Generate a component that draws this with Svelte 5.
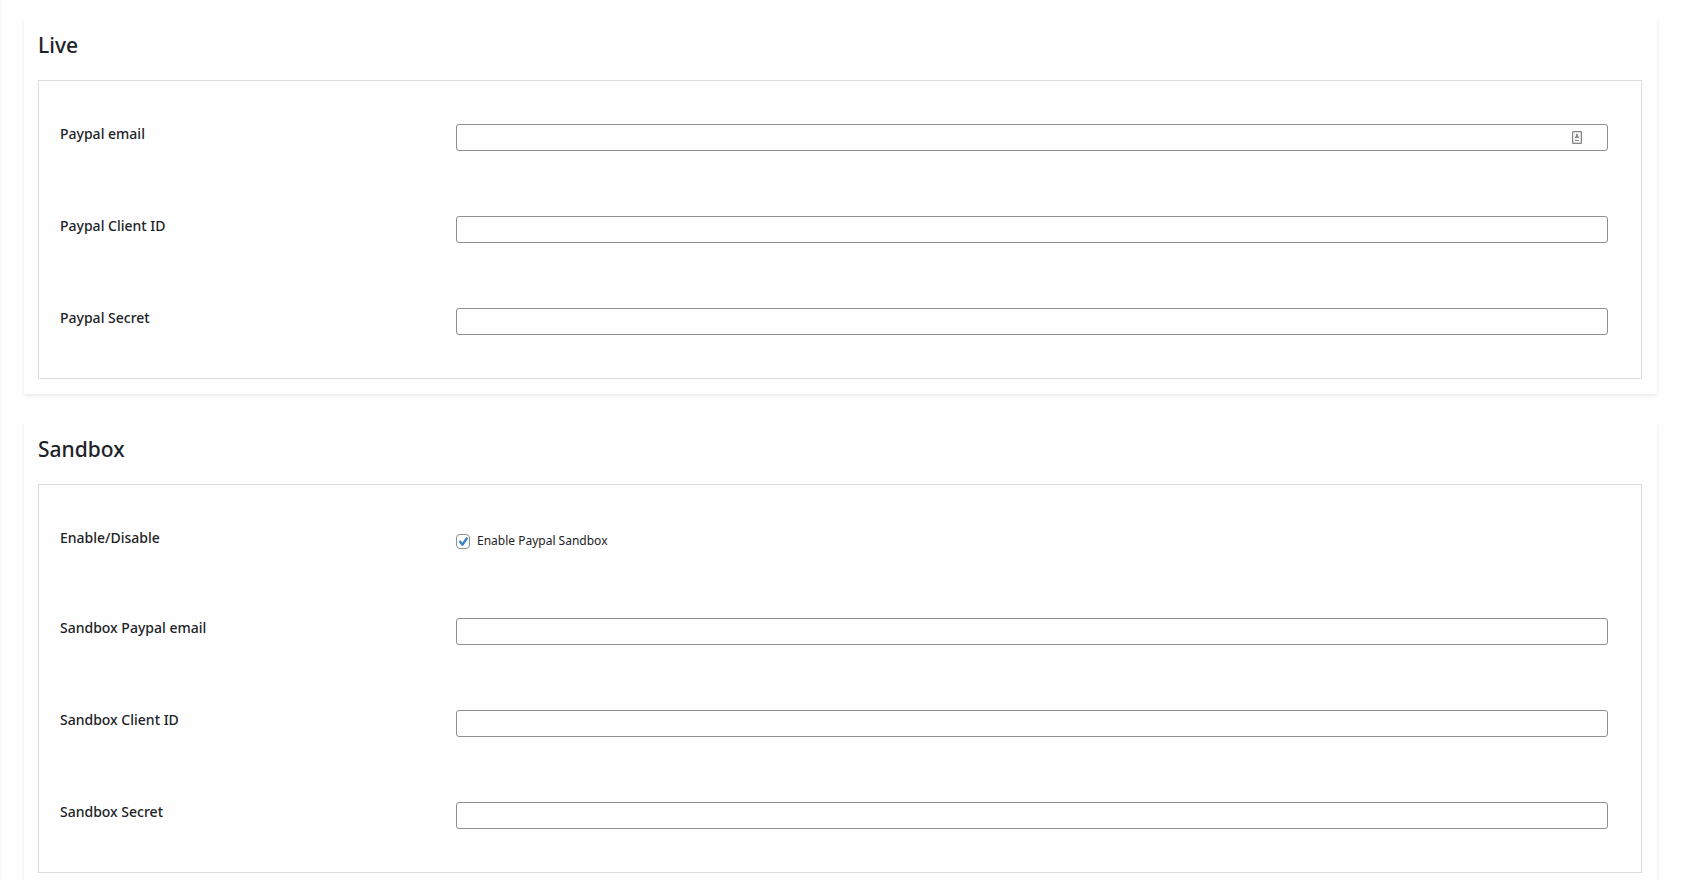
<script>
  let sandboxEnabled = $state(true);

  const sections = [
    {
      title: 'Live',
      fields: [
        { id: 'live-email', label: 'Paypal email', autofill: true },
        { id: 'live-client', label: 'Paypal Client ID' },
        { id: 'live-secret', label: 'Paypal Secret' }
      ]
    },
    {
      title: 'Sandbox',
      fields: [
        { id: 'sandbox-enable', label: 'Enable/Disable', option: 'Enable Paypal Sandbox' },
        { id: 'sandbox-email', label: 'Sandbox Paypal email' },
        { id: 'sandbox-client', label: 'Sandbox Client ID' },
        { id: 'sandbox-secret', label: 'Sandbox Secret' }
      ]
    }
  ];
</script>

<main>
  {#each sections as section}
    <section class="card">
      <h2>{section.title}</h2>
      <div class="panel">
        {#each section.fields as field}
          <div class="row" class:check-row={field.option}>
            <label class="name" for={field.id}>{field.label}</label>
            {#if field.option}
              <label class="option">
                <span class="tick">
                  <input id={field.id} type="checkbox" bind:checked={sandboxEnabled} />
                  {#if sandboxEnabled}
                    <svg viewBox="0 0 15 15" aria-hidden="true">
                      <path d="M2.6 7.4 4.6 6.2 6.3 8.7 10.4 2.9 12.2 4.2 7.2 11.8H5.8Z" fill="#3582c4" />
                    </svg>
                  {/if}
                </span>
                {field.option}
              </label>
            {:else}
              <div class="control">
                <input id={field.id} type="text" />
                {#if field.autofill}
                  <svg class="autofill" viewBox="0 0 10 13" aria-hidden="true">
                    <rect x="0.6" y="0.6" width="8.8" height="11.8" rx="0.5" fill="#f4f4f4" stroke="#858585" stroke-width="1.2" />
                    <path d="M5 3v2" stroke="#777" stroke-width="1.6" />
                    <path d="M3 6.5h4M3 9.5h4" stroke="#8c8c8c" />
                    <path d="M3.5 5.5h3" stroke="#888" />
                  </svg>
                {/if}
              </div>
            {/if}
          </div>
        {/each}
      </div>
    </section>
  {/each}
</main>

<style>
  :global(body) {
    background: #fefefe;
  }
  main {
    display: flex;
    flex-direction: column;
    gap: 28px;
    padding: 18px 42px 0 22px;
    border-left: 2px solid #fafafa;
    font-family: 'Segoe UI', 'Noto Sans', sans-serif;
    color: #1d2327;
  }
  .card {
    padding: 11px 15px 15px 14px;
    background: #fefefe;
    box-shadow: 0 2px 4px rgba(0, 0, 0, 0.08);
  }
  h2 {
    margin: 0 0 19px;
    font-size: 21px;
    line-height: 32px;
    font-weight: 500;
  }
  .panel {
    padding: 10px 33px 11px 21px;
    border: 1px solid #dcdce2;
  }
  .row {
    display: grid;
    grid-template-columns: minmax(160px, 396fr) 1152fr;
    align-items: start;
    height: 92px;
    box-sizing: border-box;
    padding-top: 33px;
  }
  .check-row {
    height: 90px;
  }
  .name {
    font-size: 14px;
    line-height: 20px;
    font-weight: 500;
  }
  .control {
    position: relative;
    display: flex;
  }
  .control input {
    width: 100%;
    height: 27px;
    box-sizing: border-box;
    margin: 0;
    padding: 0 8px;
    border: 1px solid #8c8f94;
    border-radius: 3px;
    background: #fefefe;
    font: inherit;
    font-size: 13px;
  }
  .autofill {
    position: absolute;
    top: 7px;
    right: 26px;
    width: 10px;
    height: 13px;
  }
  .option {
    display: flex;
    align-items: center;
    gap: 6px;
    padding-top: 3px;
    font-size: 12px;
    line-height: 20px;
  }
  .tick {
    display: grid;
    width: 15px;
    height: 15px;
  }
  .tick > * {
    grid-area: 1 / 1;
  }
  .tick input {
    appearance: none;
    width: 14px;
    height: 15px;
    box-sizing: border-box;
    margin: 0;
    border: 1px solid #8c8f94;
    border-radius: 4px;
    background: #fefefe;
  }
  .tick svg {
    width: 15px;
    height: 15px;
    pointer-events: none;
  }
</style>
